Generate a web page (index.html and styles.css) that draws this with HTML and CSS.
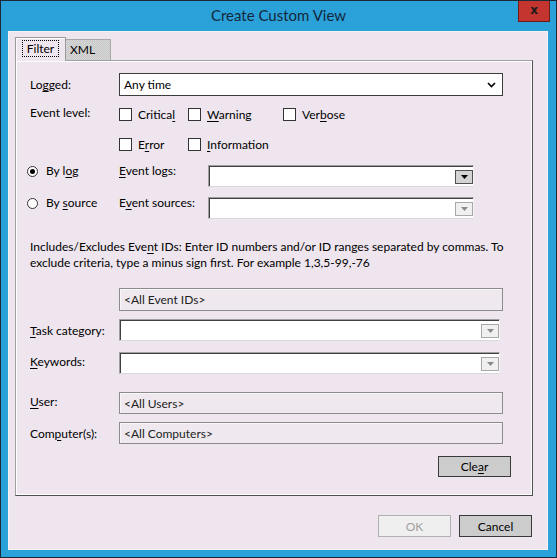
FILE: index.html
```html
<!DOCTYPE html>
<html>
<head>
<meta charset="utf-8">
<link rel="stylesheet" href="styles.css">
</head>
<body>
<div class="window">
  <div class="titlebar">
    <span></span>
    <span class="title">Create Custom View</span>
    <div class="close">x</div>
  </div>
  <div class="client">
    <div class="tabs">
      <div class="tab active"><span class="focus">Filter</span></div>
      <div class="tab inactive">XML</div>
    </div>
    <div class="panel">
      <div class="row">
        <span class="label">Lo<u>g</u>ged:</span>
        <div class="select w384">
          <span>Any time</span>
          <svg class="chev" width="9" height="6" viewBox="0 0 9 6"><path d="M1 1 L4.5 4.5 L8 1" fill="none" stroke="#000" stroke-width="1.6"/></svg>
        </div>
      </div>
      <div class="levels">
        <span class="label">Event level:</span>
        <div class="checks">
          <label class="check"><span class="box"></span><span>Critica<u>l</u></span></label>
          <label class="check"><span class="box"></span><span><u>W</u>arning</span></label>
          <label class="check"><span class="box"></span><span>Ver<u>b</u>ose</span></label>
          <label class="check"><span class="box"></span><span>E<u>r</u>ror</span></label>
          <label class="check"><span class="box"></span><span><u>I</u>nformation</span></label>
        </div>
      </div>
      <div class="row srcrow first">
        <span class="radio-wrap"><span class="radio checked"></span><span>By l<u>o</u>g</span></span>
        <span class="label"><u>E</u>vent logs:</span>
        <div class="combo w266">
          <span class="dd"><svg width="7" height="4" viewBox="0 0 7 4"><path d="M0 0 H7 L3.5 4 Z" fill="#000"/></svg></span>
        </div>
      </div>
      <div class="row srcrow second">
        <span class="radio-wrap"><span class="radio"></span><span>By <u>s</u>ource</span></span>
        <span class="label">E<u>v</u>ent sources:</span>
        <div class="combo w266">
          <span class="dd disabled"><svg width="7" height="4" viewBox="0 0 7 4"><path d="M0 0 H7 L3.5 4 Z" fill="#8a8a8a"/></svg></span>
        </div>
      </div>
      <p class="help">Includes/Excludes Eve<u>n</u>t IDs: Enter ID numbers and/or ID ranges separated by commas. To<br>exclude criteria, type a minus sign first. For example 1,3,5-99,-76</p>
      <div class="row ids">
        <span class="label"></span>
        <div class="text w384">&lt;All Event IDs&gt;</div>
      </div>
      <div class="row task">
        <span class="label"><u>T</u>ask category:</span>
        <div class="combo w381">
          <span class="dd disabled"><svg width="7" height="4" viewBox="0 0 7 4"><path d="M0 0 H7 L3.5 4 Z" fill="#8a8a8a"/></svg></span>
        </div>
      </div>
      <div class="row keywords">
        <span class="label"><u>K</u>eywords:</span>
        <div class="combo w381">
          <span class="dd disabled"><svg width="7" height="4" viewBox="0 0 7 4"><path d="M0 0 H7 L3.5 4 Z" fill="#8a8a8a"/></svg></span>
        </div>
      </div>
      <div class="row user">
        <span class="label"><u>U</u>ser:</span>
        <div class="text w384">&lt;All Users&gt;</div>
      </div>
      <div class="row computer">
        <span class="label">Com<u>p</u>uter(s):</span>
        <div class="text w384">&lt;All Computers&gt;</div>
      </div>
      <div class="clear-row">
        <div class="btn">Cle<u>a</u>r</div>
      </div>
    </div>
    <div class="buttons">
      <div class="btn disabled">OK</div>
      <div class="btn">Cancel</div>
    </div>
  </div>
</div>
</body>
</html>
```

FILE: styles.css
```css
html, body {
  margin: 0;
  padding: 0;
}
body {
  font-family: Lato, "Noto Sans", sans-serif;
  font-size: 12px;
  color: #000;
}
u {
  text-decoration-thickness: 1px;
  text-underline-offset: 2px;
}
.window {
  width: 557px;
  height: 558px;
  box-sizing: border-box;
  border: 1px solid #1a2a36;
  background: #2aa1d9;
  display: flex;
  flex-direction: column;
}
.titlebar {
  height: 30px;
  flex: none;
  display: grid;
  grid-template-columns: 1fr auto 1fr;
  align-items: center;
}
.title {
  font-size: 15px;
  color: #14283c;
  margin-top: -3px;
}
.close {
  justify-self: end;
  align-self: start;
  width: 32px;
  height: 21px;
  margin-right: 6px;
  box-sizing: border-box;
  background: #c3352e;
  border: 1px solid #6a1c18;
  border-top: 0;
  display: flex;
  align-items: center;
  justify-content: center;
  font-family: "DejaVu Sans", sans-serif;
  font-weight: bold;
  font-size: 12px;
  color: #1a1a1a;
  padding-bottom: 2px;
}
.client {
  flex: 1;
  margin: 0 8px 7px 7px;
  background: #eee5ee;
  box-shadow: inset 0 0 0 1px #f6f2f6;
  padding: 6px 15px 0 7px;
  display: flex;
  flex-direction: column;
}
.tabs {
  display: flex;
  align-items: flex-end;
  height: 24px;
  margin-bottom: -1px;
  position: relative;
  z-index: 1;
}
.tab {
  box-sizing: border-box;
  display: flex;
  align-items: center;
  justify-content: center;
}
.tab.active {
  width: 51px;
  height: 24px;
  background: #eee5ee;
  border: 1px solid #9a9a9a;
  border-bottom: 0;
  box-shadow: inset 1px 1px 0 #fff;
  padding-bottom: 3px;
}
.focus {
  outline: 1px dotted #000;
  outline-offset: 0;
  padding: 0 4px;
  line-height: 15px;
}
.tab.inactive {
  width: 45px;
  height: 21px;
  margin-bottom: 1px;
  border: 1px solid #a8a8a8;
  border-left: 0;
  border-bottom: 0;
  background: repeating-conic-gradient(#d8d8d8 0 25%, #c6c6c6 0 50%) 0 0 / 2px 2px;
  justify-content: flex-start;
  padding-left: 4px;
  padding-bottom: 1px;
}
.panel {
  height: 436px;
  box-sizing: border-box;
  border: 1px solid;
  border-color: #a0a0a0 #505050 #505050 #a0a0a0;
  box-shadow: inset -1px -1px 0 #fff, inset 1px 1px 0 #fff;
  padding: 12px 0 0 14px;
}
.row {
  display: flex;
  align-items: center;
}
.label {
  width: 89px;
  flex: none;
  white-space: nowrap;
}
.w384 { width: 384px; }
.w381 { width: 381px; }
.w266 { width: 266px; }
.select {
  height: 23px;
  box-sizing: border-box;
  border: 1px solid #3c3c3c;
  background: #fff;
  display: flex;
  align-items: center;
  justify-content: space-between;
  padding: 0 6px 0 4px;
}
.chev { display: block; }
.levels {
  display: flex;
  align-items: flex-start;
  margin-top: 11px;
}
.levels .label {
  line-height: 15px;
  margin-top: -2px;
}
.checks {
  display: grid;
  grid-template-columns: 69px 95px auto;
  grid-auto-rows: 15px;
  row-gap: 15px;
}
.check {
  display: flex;
  align-items: center;
  white-space: nowrap;
}
.box {
  width: 13px;
  height: 13px;
  box-sizing: border-box;
  border: 1px solid #333;
  background: #fff;
  margin-right: 6px;
}
.srcrow {
  height: 22px;
  align-items: flex-start;
}
.srcrow.first { margin-top: 13px; }
.srcrow.second { margin-top: 10px; }
.srcrow .label,
.srcrow .radio-wrap {
  line-height: 16px;
  margin-top: -2px;
}
.radio-wrap {
  width: 92px;
  flex: none;
  margin-left: -3px;
  display: flex;
  align-items: center;
  white-space: nowrap;
}
.radio {
  width: 11px;
  height: 11px;
  box-sizing: border-box;
  border: 1px solid #333;
  border-radius: 50%;
  background: #fff;
  margin-right: 8px;
  display: flex;
  align-items: center;
  justify-content: center;
}
.radio.checked::after {
  content: "";
  width: 5px;
  height: 5px;
  border-radius: 50%;
  background: #000;
}
.combo {
  height: 22px;
  box-sizing: border-box;
  background: #fff;
  border: 1px solid;
  border-color: #a0a0a0 #f4f4f4 #d8d8d8 #a0a0a0;
  box-shadow: inset 1px 1px 0 #404040;
  display: flex;
  align-items: center;
  justify-content: flex-end;
  padding: 2px 0 0;
}
.dd {
  width: 18px;
  height: 14px;
  box-sizing: border-box;
  border: 1px solid #505050;
  background: #d4d4d4;
  display: flex;
  align-items: center;
  justify-content: center;
}
.dd.disabled {
  border-color: #a8a8a8;
  background: #f0f0f0;
}
.dd svg { display: block; }
.help {
  margin: 20px 0 0;
  line-height: 16px;
  white-space: nowrap;
}
.text {
  height: 22px;
  box-sizing: border-box;
  border: 1px solid #8c8c8c;
  background: #efe9ef;
  box-shadow: inset 1px 1px 0 #f8f6f8;
  display: flex;
  align-items: center;
  padding-left: 4px;
  color: #222;
}
.ids { margin-top: 17px; }
.ids .text { height: 23px; }
.task { margin-top: 8px; }
.keywords { margin-top: 11px; }
.user { margin-top: 18px; }
.computer { margin-top: 8px; }
.keywords .label,
.user .label {
  margin-top: -4px;
}
.clear-row {
  display: flex;
  justify-content: flex-end;
  margin-top: 12px;
  padding-right: 21px;
}
.btn {
  width: 73px;
  height: 22px;
  box-sizing: border-box;
  border: 1px solid #3a3a3a;
  background: #cccccc;
  display: flex;
  align-items: center;
  justify-content: center;
}
.clear-row .btn { height: 21px; }
.btn.disabled {
  border-color: #b0b0b0;
  background: #efefef;
  color: #a0a0a0;
}
.buttons {
  display: flex;
  justify-content: flex-end;
  gap: 8px;
  margin-top: 19px;
  padding-right: 1px;
}
```
